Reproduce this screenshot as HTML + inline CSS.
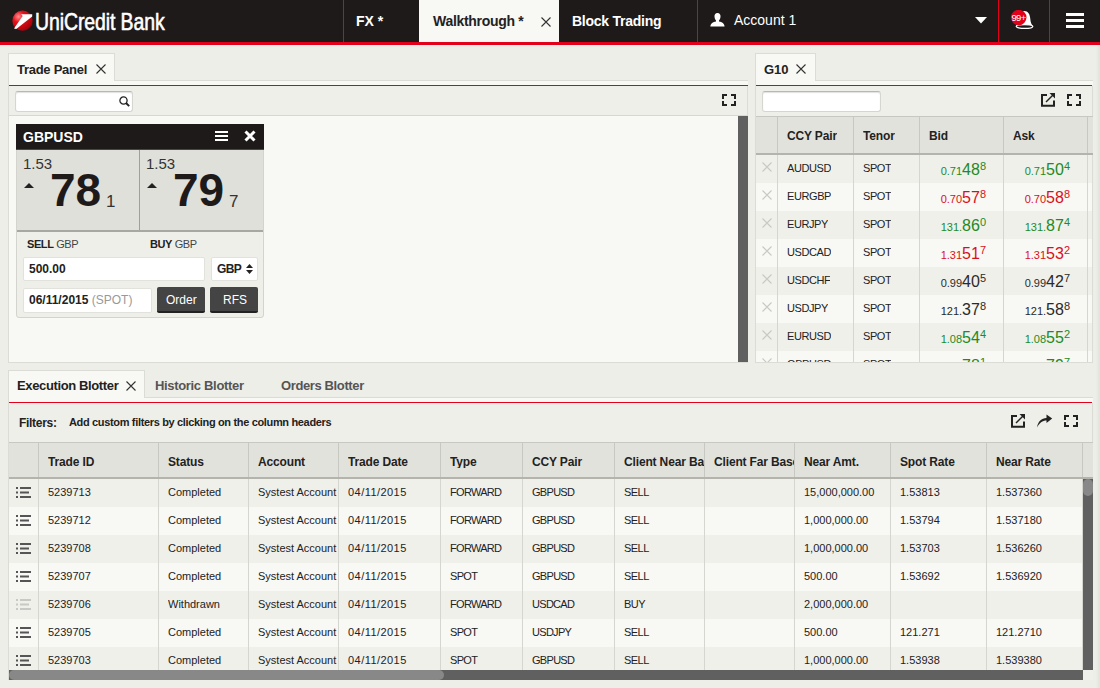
<!DOCTYPE html><html><head><meta charset="utf-8"><style>
*{margin:0;padding:0;box-sizing:border-box}
html,body{width:1100px;height:688px;overflow:hidden;background:#eeeee8;font-family:"Liberation Sans",sans-serif;color:#222}
.a{position:absolute}
.t{position:absolute;white-space:nowrap;line-height:1}
.b{font-weight:bold}
.wt{color:#fff}
.vsep{top:0;width:1px;height:42px;background:#e2001a}
.tab{position:absolute;background:#f8f8f4;border:1px solid #dcdcd6;border-bottom:none}
.strip{position:absolute;background:#f8f8f4;border-top:1px solid #dcdcd6;height:5px}
.red{position:absolute;background:#e2001a;height:1px}
.tb{position:absolute;background:#efefe9;border-left:1px solid #dcdcd6;border-right:1px solid #dcdcd6}
.sbox{position:absolute;background:#fff;border:1px solid #d6d6d0;border-top-color:#b8b8b2;border-radius:3px;box-shadow:inset 0 1px 1px rgba(0,0,0,.12)}
.hdr{position:absolute;background:#e2e2dc;border-top:1px solid #c8c8c2;border-bottom:2px solid #b4b4ac}
.row{position:absolute;height:28px}
.odd{background:#f0f0eb}
.even{background:#f8f8f4}
.csep{position:absolute;width:1px;background:#d6d6d0}
.hsep{position:absolute;width:1px;background:#c8c8c2}
.cell{position:absolute;white-space:nowrap;line-height:1;font-size:11px;color:#222;overflow:hidden}
.hcell{position:absolute;white-space:nowrap;line-height:1;font-size:12px;font-weight:bold;color:#222;overflow:hidden;letter-spacing:-0.15px}
</style></head><body>
<div class="a" style="left:0;top:0;width:1100px;height:42px;background:#1e1a1a"></div>
<div class="a" style="left:0;top:42px;width:1100px;height:3px;background:#e2001a"></div>
<svg class="a" style="left:12px;top:10px" width="22" height="22" viewBox="0 0 22 22">
 <defs><radialGradient id="lg" cx="0.3" cy="0.3" r="0.8"><stop offset="0" stop-color="#ff9090"/><stop offset="0.35" stop-color="#e8101a"/><stop offset="1" stop-color="#a0000a"/></radialGradient></defs>
 <circle cx="10.5" cy="10.7" r="10.1" fill="url(#lg)"/>
 <path d="M9.1 4.2 L20.2 4.2 L20.2 6.4 L4.2 18.9 L2 18.6 L10.7 6.1 Z" fill="#fff"/>
</svg>
<div class="t wt" style="left:35px;top:10px;font-size:24px;letter-spacing:-0.1px;-webkit-text-stroke:0.6px #fff;transform:scaleX(0.81);transform-origin:0 0">UniCredit Bank</div>
<div class="a vsep" style="left:343px"></div>
<div class="t wt b" style="left:356px;top:14px;font-size:14px">FX *</div>
<div class="a" style="left:419px;top:0;width:140px;height:42px;background:#f8f8f4"></div>
<div class="t b" style="left:433px;top:14px;font-size:14px;color:#222;letter-spacing:-0.3px">Walkthrough *</div>
<svg class="a" style="left:541px;top:17px" width="10" height="10" viewBox="0 0 10 10"><path d="M0.5 0.5L9.5 9.5M9.5 0.5L0.5 9.5" stroke="#333" stroke-width="1.1"/></svg>
<div class="t wt b" style="left:572px;top:14px;font-size:14px;letter-spacing:-0.25px">Block Trading</div>
<div class="a vsep" style="left:697px"></div>
<svg class="a" style="left:710px;top:13px" width="15" height="14" viewBox="0 0 15 14"><path d="M7.5 0C5.3 0 4.3 1.8 4.5 3.8C4.7 5.8 5.6 7.2 6 7.6L6 8.6C3 9.2 0.6 10.4 0.4 13.6L14.6 13.6C14.4 10.4 12 9.2 9 8.6L9 7.6C9.4 7.2 10.3 5.8 10.5 3.8C10.7 1.8 9.7 0 7.5 0Z" fill="#fff"/></svg>
<div class="t wt" style="left:734px;top:13px;font-size:14px">Account 1</div>
<svg class="a" style="left:975px;top:17px" width="12" height="7" viewBox="0 0 12 7"><path d="M0 0L12 0L6 6.5Z" fill="#fff"/></svg>
<div class="a vsep" style="left:998px"></div>
<svg class="a" style="left:1009px;top:10px" width="26" height="21" viewBox="0 0 26 21">
 <path d="M15.2 0.9C19 0.9 21 4 21.3 9C21.5 12.5 22.5 14.3 24 16.2L7 16.2C8.5 14.3 9.5 12.5 9.7 9C10 4 12 0.9 15.2 0.9Z" fill="#fff"/>
 <ellipse cx="15.5" cy="16.5" rx="8.3" ry="1.9" fill="#1e1a1a" stroke="#fff" stroke-width="1.3"/>
 <circle cx="9.7" cy="7.6" r="7.8" fill="#e2001a"/>
 <text x="9.6" y="10.9" font-family="Liberation Sans" font-size="9.5" fill="#fff" text-anchor="middle" letter-spacing="-0.6">99+</text>
</svg>
<div class="a vsep" style="left:1049px"></div>
<div class="a" style="left:1066px;top:13px;width:18px;height:3px;background:#fff"></div>
<div class="a" style="left:1066px;top:19px;width:18px;height:3px;background:#fff"></div>
<div class="a" style="left:1066px;top:25px;width:18px;height:3px;background:#fff"></div>
<div class="tab" style="left:8px;top:53px;width:107px;height:33px"></div>
<div class="strip" style="left:114px;top:80px;width:634px"></div>
<div class="t b" style="left:17px;top:63px;font-size:13px;letter-spacing:-0.27px">Trade Panel</div>
<svg class="a" style="left:96px;top:64px" width="10" height="10" viewBox="0 0 10 10"><path d="M0.5 0.5L9.5 9.5M9.5 0.5L0.5 9.5" stroke="#333" stroke-width="1.1"/></svg>
<div class="red" style="left:9px;top:85px;width:739px"></div>
<div class="tb" style="left:8px;top:86px;width:740px;height:30px;border-bottom:1px solid #d8d8d2"></div>
<div class="sbox" style="left:15px;top:91px;width:118px;height:21px"></div>
<svg class="a" style="left:119px;top:96px" width="11" height="11" viewBox="0 0 11 11"><circle cx="4.5" cy="4.5" r="3.6" fill="none" stroke="#222" stroke-width="1.3"/><path d="M7 7L10.2 10.2" stroke="#222" stroke-width="1.9"/></svg>
<svg class="a" style="left:722px;top:94px" width="14" height="12" viewBox="0 0 14 12"><path d="M1 5V1H5M9 1H13V5M13 7V11H9M5 11H1V7" fill="none" stroke="#222" stroke-width="2"/></svg>
<div class="a" style="left:8px;top:116px;width:730px;height:246px;background:#f8f8f4;border-left:1px solid #dcdcd6"></div>
<div class="a" style="left:738px;top:116px;width:10px;height:246px;background:#606060"></div>
<div class="a" style="left:8px;top:362px;width:740px;height:1px;background:#dcdcd6"></div>
<div class="a" style="left:16px;top:124px;width:248px;height:194px;background:#efefe9;border:1px solid #d4d4ce;border-radius:0 0 3px 3px"></div>
<div class="a" style="left:16px;top:124px;width:248px;height:25px;background:#1e1a1a"></div>
<div class="a" style="left:16px;top:149px;width:248px;height:1px;background:#e2001a"></div>
<div class="t wt b" style="left:23px;top:130px;font-size:14px">GBPUSD</div>
<div class="a" style="left:215px;top:131px;width:13px;height:2px;background:#fff"></div>
<div class="a" style="left:215px;top:135px;width:13px;height:2px;background:#fff"></div>
<div class="a" style="left:215px;top:139px;width:13px;height:2px;background:#fff"></div>
<svg class="a" style="left:244px;top:130px" width="12" height="12" viewBox="0 0 12 12"><path d="M1.5 1.5L10.5 10.5M10.5 1.5L1.5 10.5" stroke="#fff" stroke-width="3"/></svg>
<div class="a" style="left:17px;top:150px;width:246px;height:80px;background:#e0e0da"></div>
<div class="a" style="left:139px;top:150px;width:1px;height:80px;background:#a0a09a"></div>
<div class="a" style="left:17px;top:230px;width:246px;height:2px;background:#a8a8a2"></div>
<div class="t" style="left:23px;top:156px;font-size:15px;color:#333">1.53</div>
<svg class="a" style="left:24px;top:183px" width="10" height="5" viewBox="0 0 10 5"><path d="M0 5L5 0L10 5Z" fill="#222"/></svg>
<div class="t b" style="left:50px;top:167px;font-size:46px;color:#1e1a1a">78</div>
<div class="t" style="left:106px;top:193px;font-size:17px;color:#333">1</div>
<div class="t" style="left:146px;top:156px;font-size:15px;color:#333">1.53</div>
<svg class="a" style="left:147px;top:183px" width="10" height="5" viewBox="0 0 10 5"><path d="M0 5L5 0L10 5Z" fill="#222"/></svg>
<div class="t b" style="left:173px;top:167px;font-size:46px;color:#1e1a1a">79</div>
<div class="t" style="left:229px;top:193px;font-size:17px;color:#333">7</div>
<div class="t" style="left:27px;top:239px;font-size:11px;letter-spacing:-0.4px"><b>SELL</b> <span style="color:#444">GBP</span></div>
<div class="t" style="left:150px;top:239px;font-size:11px;letter-spacing:-0.4px"><b>BUY</b> <span style="color:#444">GBP</span></div>
<div class="a" style="left:23px;top:257px;width:182px;height:24px;background:#fff;border:1px solid #e2e2dc;border-radius:2px"></div>
<div class="t b" style="left:29px;top:263px;font-size:12px">500.00</div>
<div class="a" style="left:211px;top:257px;width:47px;height:24px;background:#fff;border:1px solid #e2e2dc;border-radius:2px"></div>
<div class="t b" style="left:217px;top:263px;font-size:12px;letter-spacing:-0.6px">GBP</div>
<svg class="a" style="left:246px;top:264px" width="7" height="10" viewBox="0 0 7 10"><path d="M0 4L3.5 0L7 4Z M0 6L3.5 10L7 6Z" fill="#222"/></svg>
<div class="a" style="left:23px;top:288px;width:129px;height:25px;background:#fff;border:1px solid #e2e2dc;border-radius:2px"></div>
<div class="t b" style="left:29px;top:294px;font-size:12px">06/11/2015 <span style="font-weight:normal;color:#999">(SPOT)</span></div>
<div class="a" style="left:157px;top:287px;width:48px;height:26px;background:#444;border-radius:2px;border-bottom:2px solid #222"></div>
<div class="t wt" style="left:166px;top:294px;font-size:12px">Order</div>
<div class="a" style="left:210px;top:287px;width:48px;height:26px;background:#444;border-radius:2px;border-bottom:2px solid #222"></div>
<div class="t wt" style="left:223px;top:294px;font-size:12px">RFS</div>
<div class="tab" style="left:755px;top:53px;width:61px;height:33px"></div>
<div class="strip" style="left:815px;top:80px;width:278px"></div>
<div class="t b" style="left:764px;top:63px;font-size:13px">G10</div>
<svg class="a" style="left:796px;top:64px" width="10" height="10" viewBox="0 0 10 10"><path d="M0.5 0.5L9.5 9.5M9.5 0.5L0.5 9.5" stroke="#333" stroke-width="1.1"/></svg>
<div class="red" style="left:756px;top:85px;width:336px"></div>
<div class="tb" style="left:755px;top:86px;width:338px;height:30px"></div>
<div class="sbox" style="left:762px;top:91px;width:119px;height:21px"></div>
<svg class="a" style="left:1041px;top:93px" width="15" height="15" viewBox="0 0 15 15"><path d="M6 2H1V12.7H13V7.5" fill="none" stroke="#222" stroke-width="2"/><path d="M5 9L12 2" stroke="#222" stroke-width="1.4"/><path d="M8.5 0H14V5.5Z" fill="#222"/></svg>
<svg class="a" style="left:1067px;top:94px" width="14" height="12" viewBox="0 0 14 12"><path d="M1 5V1H5M9 1H13V5M13 7V11H9M5 11H1V7" fill="none" stroke="#222" stroke-width="2"/></svg>
<div class="hdr" style="left:755px;top:116px;width:338px;height:39px"></div>
<div class="hcell" style="left:787px;top:130px">CCY Pair</div>
<div class="hcell" style="left:863px;top:130px">Tenor</div>
<div class="hcell" style="left:929px;top:130px">Bid</div>
<div class="hcell" style="left:1013px;top:130px">Ask</div>
<div class="a" style="left:755px;top:155px;width:338px;height:207px;overflow:hidden">
<div class="row odd" style="left:0;top:0px;width:338px"></div>
<svg class="a" style="left:7px;top:7px" width="10" height="10" viewBox="0 0 10 10"><path d="M0.5 0.5L9.5 9.5M9.5 0.5L0.5 9.5" stroke="#c8c8c4" stroke-width="1.1"/></svg>
<div class="cell" style="left:32px;top:8px;letter-spacing:-0.4px">AUDUSD</div>
<div class="cell" style="left:108px;top:8px;letter-spacing:-0.4px">SPOT</div>
<div class="t" style="right:107px;top:7px;color:#238a23;font-size:11px;display:flex;align-items:baseline"><span>0.71</span><span style="font-size:16px">48</span><span style="position:relative;top:-5.5px">8</span></div>
<div class="t" style="right:23px;top:7px;color:#238a23;font-size:11px;display:flex;align-items:baseline"><span>0.71</span><span style="font-size:16px">50</span><span style="position:relative;top:-5.5px">4</span></div>
<div class="row even" style="left:0;top:28px;width:338px"></div>
<svg class="a" style="left:7px;top:35px" width="10" height="10" viewBox="0 0 10 10"><path d="M0.5 0.5L9.5 9.5M9.5 0.5L0.5 9.5" stroke="#c8c8c4" stroke-width="1.1"/></svg>
<div class="cell" style="left:32px;top:36px;letter-spacing:-0.4px">EURGBP</div>
<div class="cell" style="left:108px;top:36px;letter-spacing:-0.4px">SPOT</div>
<div class="t" style="right:107px;top:35px;color:#d8101c;font-size:11px;display:flex;align-items:baseline"><span>0.70</span><span style="font-size:16px">57</span><span style="position:relative;top:-5.5px">8</span></div>
<div class="t" style="right:23px;top:35px;color:#d8101c;font-size:11px;display:flex;align-items:baseline"><span>0.70</span><span style="font-size:16px">58</span><span style="position:relative;top:-5.5px">8</span></div>
<div class="row odd" style="left:0;top:56px;width:338px"></div>
<svg class="a" style="left:7px;top:63px" width="10" height="10" viewBox="0 0 10 10"><path d="M0.5 0.5L9.5 9.5M9.5 0.5L0.5 9.5" stroke="#c8c8c4" stroke-width="1.1"/></svg>
<div class="cell" style="left:32px;top:64px;letter-spacing:-0.4px">EURJPY</div>
<div class="cell" style="left:108px;top:64px;letter-spacing:-0.4px">SPOT</div>
<div class="t" style="right:107px;top:63px;color:#238a23;font-size:11px;display:flex;align-items:baseline"><span>131.</span><span style="font-size:16px">86</span><span style="position:relative;top:-5.5px">0</span></div>
<div class="t" style="right:23px;top:63px;color:#238a23;font-size:11px;display:flex;align-items:baseline"><span>131.</span><span style="font-size:16px">87</span><span style="position:relative;top:-5.5px">4</span></div>
<div class="row even" style="left:0;top:84px;width:338px"></div>
<svg class="a" style="left:7px;top:91px" width="10" height="10" viewBox="0 0 10 10"><path d="M0.5 0.5L9.5 9.5M9.5 0.5L0.5 9.5" stroke="#c8c8c4" stroke-width="1.1"/></svg>
<div class="cell" style="left:32px;top:92px;letter-spacing:-0.4px">USDCAD</div>
<div class="cell" style="left:108px;top:92px;letter-spacing:-0.4px">SPOT</div>
<div class="t" style="right:107px;top:91px;color:#d8101c;font-size:11px;display:flex;align-items:baseline"><span>1.31</span><span style="font-size:16px">51</span><span style="position:relative;top:-5.5px">7</span></div>
<div class="t" style="right:23px;top:91px;color:#d8101c;font-size:11px;display:flex;align-items:baseline"><span>1.31</span><span style="font-size:16px">53</span><span style="position:relative;top:-5.5px">2</span></div>
<div class="row odd" style="left:0;top:112px;width:338px"></div>
<svg class="a" style="left:7px;top:119px" width="10" height="10" viewBox="0 0 10 10"><path d="M0.5 0.5L9.5 9.5M9.5 0.5L0.5 9.5" stroke="#c8c8c4" stroke-width="1.1"/></svg>
<div class="cell" style="left:32px;top:120px;letter-spacing:-0.4px">USDCHF</div>
<div class="cell" style="left:108px;top:120px;letter-spacing:-0.4px">SPOT</div>
<div class="t" style="right:107px;top:119px;color:#2a2a2a;font-size:11px;display:flex;align-items:baseline"><span>0.99</span><span style="font-size:16px">40</span><span style="position:relative;top:-5.5px">5</span></div>
<div class="t" style="right:23px;top:119px;color:#2a2a2a;font-size:11px;display:flex;align-items:baseline"><span>0.99</span><span style="font-size:16px">42</span><span style="position:relative;top:-5.5px">7</span></div>
<div class="row even" style="left:0;top:140px;width:338px"></div>
<svg class="a" style="left:7px;top:147px" width="10" height="10" viewBox="0 0 10 10"><path d="M0.5 0.5L9.5 9.5M9.5 0.5L0.5 9.5" stroke="#c8c8c4" stroke-width="1.1"/></svg>
<div class="cell" style="left:32px;top:148px;letter-spacing:-0.4px">USDJPY</div>
<div class="cell" style="left:108px;top:148px;letter-spacing:-0.4px">SPOT</div>
<div class="t" style="right:107px;top:147px;color:#2a2a2a;font-size:11px;display:flex;align-items:baseline"><span>121.</span><span style="font-size:16px">37</span><span style="position:relative;top:-5.5px">8</span></div>
<div class="t" style="right:23px;top:147px;color:#2a2a2a;font-size:11px;display:flex;align-items:baseline"><span>121.</span><span style="font-size:16px">58</span><span style="position:relative;top:-5.5px">8</span></div>
<div class="row odd" style="left:0;top:168px;width:338px"></div>
<svg class="a" style="left:7px;top:175px" width="10" height="10" viewBox="0 0 10 10"><path d="M0.5 0.5L9.5 9.5M9.5 0.5L0.5 9.5" stroke="#c8c8c4" stroke-width="1.1"/></svg>
<div class="cell" style="left:32px;top:176px;letter-spacing:-0.4px">EURUSD</div>
<div class="cell" style="left:108px;top:176px;letter-spacing:-0.4px">SPOT</div>
<div class="t" style="right:107px;top:175px;color:#238a23;font-size:11px;display:flex;align-items:baseline"><span>1.08</span><span style="font-size:16px">54</span><span style="position:relative;top:-5.5px">4</span></div>
<div class="t" style="right:23px;top:175px;color:#238a23;font-size:11px;display:flex;align-items:baseline"><span>1.08</span><span style="font-size:16px">55</span><span style="position:relative;top:-5.5px">2</span></div>
<div class="row even" style="left:0;top:196px;width:338px"></div>
<svg class="a" style="left:7px;top:203px" width="10" height="10" viewBox="0 0 10 10"><path d="M0.5 0.5L9.5 9.5M9.5 0.5L0.5 9.5" stroke="#c8c8c4" stroke-width="1.1"/></svg>
<div class="cell" style="left:32px;top:204px;letter-spacing:-0.4px">GBPUSD</div>
<div class="cell" style="left:108px;top:204px;letter-spacing:-0.4px">SPOT</div>
<div class="t" style="right:107px;top:203px;color:#238a23;font-size:11px;display:flex;align-items:baseline"><span>1.53</span><span style="font-size:16px">78</span><span style="position:relative;top:-5.5px">1</span></div>
<div class="t" style="right:23px;top:203px;color:#238a23;font-size:11px;display:flex;align-items:baseline"><span>1.53</span><span style="font-size:16px">79</span><span style="position:relative;top:-5.5px">7</span></div>
</div>
<div class="hsep" style="left:777px;top:117px;height:36px"></div>
<div class="csep" style="left:777px;top:155px;height:207px"></div>
<div class="hsep" style="left:853px;top:117px;height:36px"></div>
<div class="csep" style="left:853px;top:155px;height:207px"></div>
<div class="hsep" style="left:919px;top:117px;height:36px"></div>
<div class="csep" style="left:919px;top:155px;height:207px"></div>
<div class="hsep" style="left:1003px;top:117px;height:36px"></div>
<div class="csep" style="left:1003px;top:155px;height:207px"></div>
<div class="hsep" style="left:1087px;top:117px;height:36px"></div>
<div class="csep" style="left:1087px;top:155px;height:207px"></div>
<div class="a" style="left:755px;top:116px;width:1px;height:247px;background:#dcdcd6"></div>
<div class="a" style="left:755px;top:362px;width:338px;height:1px;background:#dcdcd6"></div>
<div class="a" style="left:1092px;top:155px;width:1px;height:208px;background:#dcdcd6"></div>
<div class="tab" style="left:8px;top:370px;width:137px;height:33px"></div>
<div class="strip" style="left:144px;top:397px;width:949px"></div>
<div class="t b" style="left:17px;top:379px;font-size:13px;letter-spacing:-0.37px">Execution Blotter</div>
<svg class="a" style="left:126px;top:381px" width="10" height="10" viewBox="0 0 10 10"><path d="M0.5 0.5L9.5 9.5M9.5 0.5L0.5 9.5" stroke="#333" stroke-width="1.1"/></svg>
<div class="t b" style="left:155px;top:379px;font-size:13px;color:#555;letter-spacing:-0.33px">Historic Blotter</div>
<div class="t b" style="left:281px;top:379px;font-size:13px;color:#555;letter-spacing:-0.38px">Orders Blotter</div>
<div class="red" style="left:9px;top:402px;width:1083px"></div>
<div class="tb" style="left:8px;top:403px;width:1085px;height:40px"></div>
<div class="t b" style="left:19px;top:417px;font-size:12px;letter-spacing:-0.3px">Filters:</div>
<div class="t b" style="left:69px;top:417px;font-size:11px;letter-spacing:-0.34px">Add custom filters by clicking on the column headers</div>
<svg class="a" style="left:1011px;top:414px" width="15" height="15" viewBox="0 0 15 15"><path d="M6 2H1V12.7H13V7.5" fill="none" stroke="#222" stroke-width="2"/><path d="M5 9L12 2" stroke="#222" stroke-width="1.4"/><path d="M8.5 0H14V5.5Z" fill="#222"/></svg>
<svg class="a" style="left:1036px;top:414px" width="17" height="14" viewBox="0 0 17 14"><path d="M1 13.5C2 7.5 5.5 4 10.5 4V0.5L16.2 4.6L10.5 9V6.4C6.5 6.4 3.5 8.5 1 13.5Z" fill="#222"/></svg>
<svg class="a" style="left:1064px;top:415px" width="14" height="12" viewBox="0 0 14 12"><path d="M1 5V1H5M9 1H13V5M13 7V11H9M5 11H1V7" fill="none" stroke="#222" stroke-width="2"/></svg>
<div class="hdr" style="left:8px;top:442px;width:1085px;height:37px"></div>
<div class="hcell" style="left:48px;top:456px;width:110px">Trade ID</div>
<div class="hcell" style="left:168px;top:456px;width:80px">Status</div>
<div class="hcell" style="left:258px;top:456px;width:80px">Account</div>
<div class="hcell" style="left:348px;top:456px;width:92px">Trade Date</div>
<div class="hcell" style="left:450px;top:456px;width:72px">Type</div>
<div class="hcell" style="left:532px;top:456px;width:82px">CCY Pair</div>
<div class="hcell" style="left:624px;top:456px;width:80px">Client Near Base</div>
<div class="hcell" style="left:714px;top:456px;width:80px">Client Far Base</div>
<div class="hcell" style="left:804px;top:456px;width:86px">Near Amt.</div>
<div class="hcell" style="left:900px;top:456px;width:86px">Spot Rate</div>
<div class="hcell" style="left:996px;top:456px;width:86px">Near Rate</div>
<div class="a" style="left:9px;top:479px;width:1074px;height:191px;overflow:hidden">
<div class="row odd" style="left:0;top:0px;width:1074px"></div>
<svg class="a" style="left:7px;top:8px" width="15" height="11" viewBox="0 0 15 11"><g fill="#555"><rect x="0" y="0" width="2" height="2"/><rect x="0" y="4.5" width="2" height="2"/><rect x="0" y="9" width="2" height="2"/><rect x="4" y="0" width="11" height="2"/><rect x="4" y="4.5" width="9" height="2"/><rect x="4" y="9" width="11" height="2"/></g></svg>
<div class="cell" style="left:39px;top:8px;width:110px;letter-spacing:0">5239713</div>
<div class="cell" style="left:159px;top:8px;width:80px;letter-spacing:0">Completed</div>
<div class="cell" style="left:249px;top:8px;width:80px;letter-spacing:0">Systest Account</div>
<div class="cell" style="left:339px;top:8px;width:92px;letter-spacing:0.45px">04/11/2015</div>
<div class="cell" style="left:441px;top:8px;width:72px;letter-spacing:-0.7px">FORWARD</div>
<div class="cell" style="left:523px;top:8px;width:82px;letter-spacing:-0.7px">GBPUSD</div>
<div class="cell" style="left:615px;top:8px;width:80px;letter-spacing:-0.55px">SELL</div>
<div class="cell" style="left:705px;top:8px;width:80px;letter-spacing:0"></div>
<div class="cell" style="left:795px;top:8px;width:86px;letter-spacing:0">15,000,000.00</div>
<div class="cell" style="left:891px;top:8px;width:86px;letter-spacing:0">1.53813</div>
<div class="cell" style="left:987px;top:8px;width:86px;letter-spacing:0">1.537360</div>
<div class="row even" style="left:0;top:28px;width:1074px"></div>
<svg class="a" style="left:7px;top:36px" width="15" height="11" viewBox="0 0 15 11"><g fill="#555"><rect x="0" y="0" width="2" height="2"/><rect x="0" y="4.5" width="2" height="2"/><rect x="0" y="9" width="2" height="2"/><rect x="4" y="0" width="11" height="2"/><rect x="4" y="4.5" width="9" height="2"/><rect x="4" y="9" width="11" height="2"/></g></svg>
<div class="cell" style="left:39px;top:36px;width:110px;letter-spacing:0">5239712</div>
<div class="cell" style="left:159px;top:36px;width:80px;letter-spacing:0">Completed</div>
<div class="cell" style="left:249px;top:36px;width:80px;letter-spacing:0">Systest Account</div>
<div class="cell" style="left:339px;top:36px;width:92px;letter-spacing:0.45px">04/11/2015</div>
<div class="cell" style="left:441px;top:36px;width:72px;letter-spacing:-0.7px">FORWARD</div>
<div class="cell" style="left:523px;top:36px;width:82px;letter-spacing:-0.7px">GBPUSD</div>
<div class="cell" style="left:615px;top:36px;width:80px;letter-spacing:-0.55px">SELL</div>
<div class="cell" style="left:705px;top:36px;width:80px;letter-spacing:0"></div>
<div class="cell" style="left:795px;top:36px;width:86px;letter-spacing:0">1,000,000.00</div>
<div class="cell" style="left:891px;top:36px;width:86px;letter-spacing:0">1.53794</div>
<div class="cell" style="left:987px;top:36px;width:86px;letter-spacing:0">1.537180</div>
<div class="row odd" style="left:0;top:56px;width:1074px"></div>
<svg class="a" style="left:7px;top:64px" width="15" height="11" viewBox="0 0 15 11"><g fill="#555"><rect x="0" y="0" width="2" height="2"/><rect x="0" y="4.5" width="2" height="2"/><rect x="0" y="9" width="2" height="2"/><rect x="4" y="0" width="11" height="2"/><rect x="4" y="4.5" width="9" height="2"/><rect x="4" y="9" width="11" height="2"/></g></svg>
<div class="cell" style="left:39px;top:64px;width:110px;letter-spacing:0">5239708</div>
<div class="cell" style="left:159px;top:64px;width:80px;letter-spacing:0">Completed</div>
<div class="cell" style="left:249px;top:64px;width:80px;letter-spacing:0">Systest Account</div>
<div class="cell" style="left:339px;top:64px;width:92px;letter-spacing:0.45px">04/11/2015</div>
<div class="cell" style="left:441px;top:64px;width:72px;letter-spacing:-0.7px">FORWARD</div>
<div class="cell" style="left:523px;top:64px;width:82px;letter-spacing:-0.7px">GBPUSD</div>
<div class="cell" style="left:615px;top:64px;width:80px;letter-spacing:-0.55px">SELL</div>
<div class="cell" style="left:705px;top:64px;width:80px;letter-spacing:0"></div>
<div class="cell" style="left:795px;top:64px;width:86px;letter-spacing:0">1,000,000.00</div>
<div class="cell" style="left:891px;top:64px;width:86px;letter-spacing:0">1.53703</div>
<div class="cell" style="left:987px;top:64px;width:86px;letter-spacing:0">1.536260</div>
<div class="row even" style="left:0;top:84px;width:1074px"></div>
<svg class="a" style="left:7px;top:92px" width="15" height="11" viewBox="0 0 15 11"><g fill="#555"><rect x="0" y="0" width="2" height="2"/><rect x="0" y="4.5" width="2" height="2"/><rect x="0" y="9" width="2" height="2"/><rect x="4" y="0" width="11" height="2"/><rect x="4" y="4.5" width="9" height="2"/><rect x="4" y="9" width="11" height="2"/></g></svg>
<div class="cell" style="left:39px;top:92px;width:110px;letter-spacing:0">5239707</div>
<div class="cell" style="left:159px;top:92px;width:80px;letter-spacing:0">Completed</div>
<div class="cell" style="left:249px;top:92px;width:80px;letter-spacing:0">Systest Account</div>
<div class="cell" style="left:339px;top:92px;width:92px;letter-spacing:0.45px">04/11/2015</div>
<div class="cell" style="left:441px;top:92px;width:72px;letter-spacing:-0.7px">SPOT</div>
<div class="cell" style="left:523px;top:92px;width:82px;letter-spacing:-0.7px">GBPUSD</div>
<div class="cell" style="left:615px;top:92px;width:80px;letter-spacing:-0.55px">SELL</div>
<div class="cell" style="left:705px;top:92px;width:80px;letter-spacing:0"></div>
<div class="cell" style="left:795px;top:92px;width:86px;letter-spacing:0">500.00</div>
<div class="cell" style="left:891px;top:92px;width:86px;letter-spacing:0">1.53692</div>
<div class="cell" style="left:987px;top:92px;width:86px;letter-spacing:0">1.536920</div>
<div class="row odd" style="left:0;top:112px;width:1074px"></div>
<svg class="a" style="left:7px;top:120px" width="15" height="11" viewBox="0 0 15 11"><g fill="#c8c8c4"><rect x="0" y="0" width="2" height="2"/><rect x="0" y="4.5" width="2" height="2"/><rect x="0" y="9" width="2" height="2"/><rect x="4" y="0" width="11" height="2"/><rect x="4" y="4.5" width="9" height="2"/><rect x="4" y="9" width="11" height="2"/></g></svg>
<div class="cell" style="left:39px;top:120px;width:110px;letter-spacing:0">5239706</div>
<div class="cell" style="left:159px;top:120px;width:80px;letter-spacing:0">Withdrawn</div>
<div class="cell" style="left:249px;top:120px;width:80px;letter-spacing:0">Systest Account</div>
<div class="cell" style="left:339px;top:120px;width:92px;letter-spacing:0.45px">04/11/2015</div>
<div class="cell" style="left:441px;top:120px;width:72px;letter-spacing:-0.7px">FORWARD</div>
<div class="cell" style="left:523px;top:120px;width:82px;letter-spacing:-0.7px">USDCAD</div>
<div class="cell" style="left:615px;top:120px;width:80px;letter-spacing:-0.55px">BUY</div>
<div class="cell" style="left:705px;top:120px;width:80px;letter-spacing:0"></div>
<div class="cell" style="left:795px;top:120px;width:86px;letter-spacing:0">2,000,000.00</div>
<div class="cell" style="left:891px;top:120px;width:86px;letter-spacing:0"></div>
<div class="cell" style="left:987px;top:120px;width:86px;letter-spacing:0"></div>
<div class="row even" style="left:0;top:140px;width:1074px"></div>
<svg class="a" style="left:7px;top:148px" width="15" height="11" viewBox="0 0 15 11"><g fill="#555"><rect x="0" y="0" width="2" height="2"/><rect x="0" y="4.5" width="2" height="2"/><rect x="0" y="9" width="2" height="2"/><rect x="4" y="0" width="11" height="2"/><rect x="4" y="4.5" width="9" height="2"/><rect x="4" y="9" width="11" height="2"/></g></svg>
<div class="cell" style="left:39px;top:148px;width:110px;letter-spacing:0">5239705</div>
<div class="cell" style="left:159px;top:148px;width:80px;letter-spacing:0">Completed</div>
<div class="cell" style="left:249px;top:148px;width:80px;letter-spacing:0">Systest Account</div>
<div class="cell" style="left:339px;top:148px;width:92px;letter-spacing:0.45px">04/11/2015</div>
<div class="cell" style="left:441px;top:148px;width:72px;letter-spacing:-0.7px">SPOT</div>
<div class="cell" style="left:523px;top:148px;width:82px;letter-spacing:-0.7px">USDJPY</div>
<div class="cell" style="left:615px;top:148px;width:80px;letter-spacing:-0.55px">SELL</div>
<div class="cell" style="left:705px;top:148px;width:80px;letter-spacing:0"></div>
<div class="cell" style="left:795px;top:148px;width:86px;letter-spacing:0">500.00</div>
<div class="cell" style="left:891px;top:148px;width:86px;letter-spacing:0">121.271</div>
<div class="cell" style="left:987px;top:148px;width:86px;letter-spacing:0">121.2710</div>
<div class="row odd" style="left:0;top:168px;width:1074px"></div>
<svg class="a" style="left:7px;top:176px" width="15" height="11" viewBox="0 0 15 11"><g fill="#555"><rect x="0" y="0" width="2" height="2"/><rect x="0" y="4.5" width="2" height="2"/><rect x="0" y="9" width="2" height="2"/><rect x="4" y="0" width="11" height="2"/><rect x="4" y="4.5" width="9" height="2"/><rect x="4" y="9" width="11" height="2"/></g></svg>
<div class="cell" style="left:39px;top:176px;width:110px;letter-spacing:0">5239703</div>
<div class="cell" style="left:159px;top:176px;width:80px;letter-spacing:0">Completed</div>
<div class="cell" style="left:249px;top:176px;width:80px;letter-spacing:0">Systest Account</div>
<div class="cell" style="left:339px;top:176px;width:92px;letter-spacing:0.45px">04/11/2015</div>
<div class="cell" style="left:441px;top:176px;width:72px;letter-spacing:-0.7px">SPOT</div>
<div class="cell" style="left:523px;top:176px;width:82px;letter-spacing:-0.7px">GBPUSD</div>
<div class="cell" style="left:615px;top:176px;width:80px;letter-spacing:-0.55px">SELL</div>
<div class="cell" style="left:705px;top:176px;width:80px;letter-spacing:0"></div>
<div class="cell" style="left:795px;top:176px;width:86px;letter-spacing:0">1,000,000.00</div>
<div class="cell" style="left:891px;top:176px;width:86px;letter-spacing:0">1.53938</div>
<div class="cell" style="left:987px;top:176px;width:86px;letter-spacing:0">1.539380</div>
</div>
<div class="hsep" style="left:38px;top:443px;height:34px"></div>
<div class="csep" style="left:38px;top:479px;height:191px"></div>
<div class="hsep" style="left:158px;top:443px;height:34px"></div>
<div class="csep" style="left:158px;top:479px;height:191px"></div>
<div class="hsep" style="left:248px;top:443px;height:34px"></div>
<div class="csep" style="left:248px;top:479px;height:191px"></div>
<div class="hsep" style="left:338px;top:443px;height:34px"></div>
<div class="csep" style="left:338px;top:479px;height:191px"></div>
<div class="hsep" style="left:440px;top:443px;height:34px"></div>
<div class="csep" style="left:440px;top:479px;height:191px"></div>
<div class="hsep" style="left:522px;top:443px;height:34px"></div>
<div class="csep" style="left:522px;top:479px;height:191px"></div>
<div class="hsep" style="left:614px;top:443px;height:34px"></div>
<div class="csep" style="left:614px;top:479px;height:191px"></div>
<div class="hsep" style="left:704px;top:443px;height:34px"></div>
<div class="csep" style="left:704px;top:479px;height:191px"></div>
<div class="hsep" style="left:794px;top:443px;height:34px"></div>
<div class="csep" style="left:794px;top:479px;height:191px"></div>
<div class="hsep" style="left:890px;top:443px;height:34px"></div>
<div class="csep" style="left:890px;top:479px;height:191px"></div>
<div class="hsep" style="left:986px;top:443px;height:34px"></div>
<div class="csep" style="left:986px;top:479px;height:191px"></div>
<div class="hsep" style="left:1082px;top:443px;height:34px"></div>
<div class="csep" style="left:1082px;top:479px;height:191px"></div>
<div class="a" style="left:8px;top:442px;width:1px;height:238px;background:#dcdcd6"></div>
<div class="a" style="left:1083px;top:479px;width:10px;height:191px;background:#606060"></div>
<div class="a" style="left:1083px;top:479px;width:10px;height:17px;background:#888;border-radius:5px"></div>
<div class="a" style="left:9px;top:670px;width:1074px;height:10px;background:#606060"></div>
<div class="a" style="left:9px;top:670px;width:435px;height:10px;background:#888;border-radius:5px"></div>
<div class="a" style="left:1083px;top:670px;width:10px;height:10px;background:#f0f0ea"></div>
<div class="a" style="left:1096px;top:45px;width:4px;height:643px;background:linear-gradient(90deg,#eeeee8,#e2e2dc)"></div>
</body></html>
